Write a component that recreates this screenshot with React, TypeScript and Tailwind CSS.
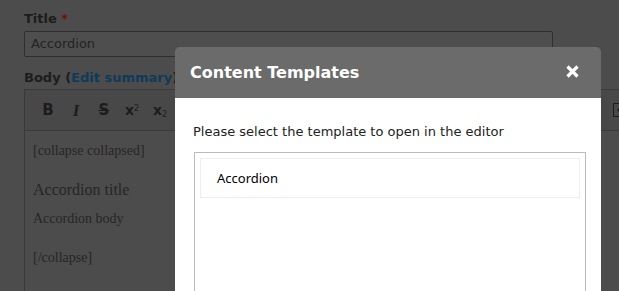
import React from 'react';

const ToolButton = ({ children }: { children: React.ReactNode }) => (
  <div className="w-[28px] h-[28px] flex items-center justify-center text-[#1c1c1c]">{children}</div>
);

const App = () => {
  return (
    <div className="relative w-[619px] h-[291px] overflow-hidden bg-[#4c4c4c] font-['DejaVu_Sans',sans-serif]">
      {/* Node form behind the dialog */}
      <div className="pl-[24px] pt-[11px]">
        <label className="block text-[13px] leading-[16px] font-bold text-[#1c1c1c]">
          Title <span className="text-[#6e1208]">*</span>
        </label>
        <div className="mt-[4px] w-[529px] h-[26px] border border-[#2f2f2f] rounded-[2px] bg-[#4e4e4e] px-[6px] flex items-center text-[13px] text-[#232323]">
          Accordion
        </div>

        <div className="mt-[13px] text-[13px] leading-[16px] font-bold text-[#1c1c1c]">
          Body (<span className="text-[#0f3b5a]">Edit summary</span>)
        </div>

        {/* Editor */}
        <div className="mt-[3px] w-[620px] border border-[#3a3a3a]">
          <div className="h-[41px] bg-[#484848] border-b border-[#3a3a3a] flex items-center pl-[9px]">
            <ToolButton>
              <span className="text-[15px] font-bold leading-none">B</span>
            </ToolButton>
            <ToolButton>
              <span className="font-['Liberation_Serif',serif] text-[17px] font-bold italic leading-none">I</span>
            </ToolButton>
            <ToolButton>
              <span className="text-[15px] font-bold leading-none line-through">S</span>
            </ToolButton>
            <ToolButton>
              <span className="text-[14px] font-bold leading-none">
                x<sup className="text-[8px] font-normal">2</sup>
              </span>
            </ToolButton>
            <ToolButton>
              <span className="text-[14px] font-bold leading-none">
                x<sub className="text-[8px] font-normal">2</sub>
              </span>
            </ToolButton>
            <svg width="14" height="14" viewBox="0 0 14 14" className="ml-[439px] text-[#1c1c1c]">
              <rect x="0.5" y="0.5" width="13" height="13" fill="none" stroke="currentColor" />
              <path d="M4 7 L7 4.5 L7 9.5 Z" fill="currentColor" />
            </svg>
          </div>
          <div className="bg-[#4c4c4c] pl-[8px] pt-[11px] h-[200px] font-['Liberation_Serif',serif] text-[#262626]">
            <p className="text-[14px] leading-[18px]">[collapse collapsed]</p>
            <h3 className="mt-[20px] text-[16px] leading-[20px]">Accordion title</h3>
            <p className="mt-[10px] text-[14px] leading-[18px]">Accordion body</p>
            <p className="mt-[21px] text-[14px] leading-[18px]">[/collapse]</p>
          </div>
        </div>
      </div>

      {/* Dialog */}
      <div className="absolute left-[175px] top-[47px] w-[426px] rounded-t-[5px] overflow-hidden">
        <div className="h-[51px] bg-[#6b6b6b] flex items-center justify-between pl-[15px] pr-[22px]">
          <h2 className="text-[16px] font-bold text-white">Content Templates</h2>
          <svg width="13" height="13" viewBox="0 0 13 13" className="text-white -mt-[2px]">
            <path d="M1.5 1.5 L11.5 11.5 M11.5 1.5 L1.5 11.5" stroke="currentColor" strokeWidth="3.2" />
          </svg>
        </div>
        <div className="bg-white px-[18px] pt-[25px] h-[200px]">
          <p className="text-[13px] leading-[18px] text-[#222]">Please select the template to open in the editor</p>
          <div className="mt-[11px] ml-[1px] w-[392px] h-[160px] border border-[#bbbbbb] p-[5px]">
            <div className="h-[40px] border border-[#eeeeee] pl-[16px] pt-[1px] flex items-center font-['Noto_Sans',sans-serif] text-[13px] text-black">
              Accordion
            </div>
          </div>
        </div>
      </div>
    </div>
  );
};

export default App;
